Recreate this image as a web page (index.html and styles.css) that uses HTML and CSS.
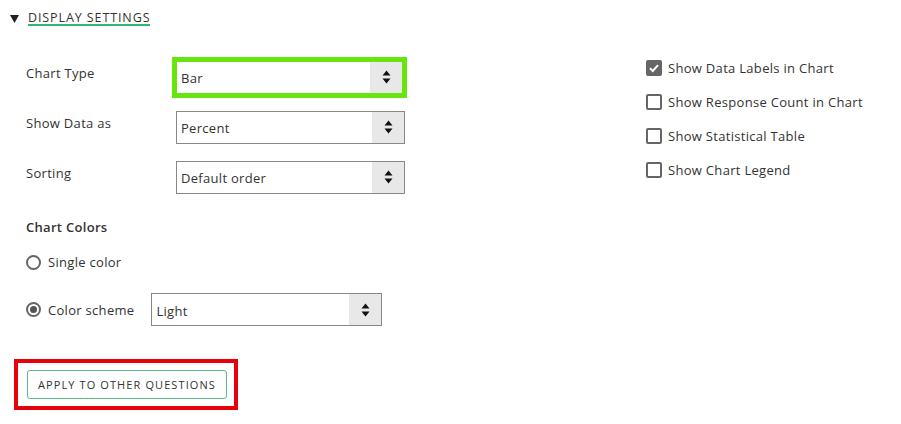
FILE: index.html
```html
<!DOCTYPE html>
<html lang="en">

<head>
    <meta charset="UTF-8">
    <meta name="viewport" content="width=device-width, initial-scale=1.0">
    <title>Display Settings</title>
    <link rel="stylesheet" href="styles.css">
</head>

<body>
    <div class="section-header">
        <span class="caret">
            <svg width="9" height="8" viewBox="0 0 9 8"><path d="M0 0 L9 0 L4.5 8 Z" fill="#222"/></svg>
        </span>
        <span class="section-title">Display Settings</span>
    </div>

    <div class="panel">
        <div class="left-col">
            <div class="form-grid">
                <div class="field-label">Chart Type</div>
                <div class="select highlighted">
                    <span class="select-value">Bar</span>
                    <span class="select-arrows">
                        <svg width="9" height="14" viewBox="0 0 9 14"><path d="M4.5 0.5 L8.5 5.5 L0.5 5.5 Z M4.5 13.5 L8.5 8.5 L0.5 8.5 Z" fill="#111"/></svg>
                    </span>
                </div>

                <div class="field-label">Show Data as</div>
                <div class="select">
                    <span class="select-value">Percent</span>
                    <span class="select-arrows">
                        <svg width="9" height="14" viewBox="0 0 9 14"><path d="M4.5 0.5 L8.5 5.5 L0.5 5.5 Z M4.5 13.5 L8.5 8.5 L0.5 8.5 Z" fill="#111"/></svg>
                    </span>
                </div>

                <div class="field-label">Sorting</div>
                <div class="select">
                    <span class="select-value">Default order</span>
                    <span class="select-arrows">
                        <svg width="9" height="14" viewBox="0 0 9 14"><path d="M4.5 0.5 L8.5 5.5 L0.5 5.5 Z M4.5 13.5 L8.5 8.5 L0.5 8.5 Z" fill="#111"/></svg>
                    </span>
                </div>
            </div>

            <div class="group-title">Chart Colors</div>

            <div class="radio-row single">
                <span class="radio"></span>
                <span class="radio-label">Single color</span>
            </div>

            <div class="radio-row scheme">
                <span class="radio checked"></span>
                <span class="radio-label">Color scheme</span>
                <div class="select scheme-select">
                    <span class="select-value">Light</span>
                    <span class="select-arrows">
                        <svg width="9" height="14" viewBox="0 0 9 14"><path d="M4.5 0.5 L8.5 5.5 L0.5 5.5 Z M4.5 13.5 L8.5 8.5 L0.5 8.5 Z" fill="#111"/></svg>
                    </span>
                </div>
            </div>

            <div class="apply-box">
                <button type="button" class="apply-btn">Apply to other questions</button>
            </div>
        </div>

        <div class="right-col">
            <div class="check-row">
                <span class="checkbox checked">
                    <svg width="12" height="12" viewBox="0 0 12 12"><path d="M2 6.2 L4.8 9 L10 3.2" fill="none" stroke="#fff" stroke-width="2"/></svg>
                </span>
                <span>Show Data Labels in Chart</span>
            </div>
            <div class="check-row">
                <span class="checkbox"></span>
                <span>Show Response Count in Chart</span>
            </div>
            <div class="check-row">
                <span class="checkbox"></span>
                <span>Show Statistical Table</span>
            </div>
            <div class="check-row">
                <span class="checkbox"></span>
                <span>Show Chart Legend</span>
            </div>
        </div>
    </div>
</body>

</html>
```

FILE: styles.css
```css
body {
    margin: 0;
    background-color: #ffffff;
    color: #333;
    font-family: 'Open Sans', sans-serif;
    font-size: 13px;
    letter-spacing: 0.3px;
}

.section-header {
    display: flex;
    align-items: flex-start;
    padding: 12px 0 0 10px;
}

.caret {
    width: 18px;
    height: 12px;
    display: flex;
    align-items: center;
    padding-top: 1px;
}

.section-title {
    text-transform: uppercase;
    font-size: 12.5px;
    line-height: 12px;
    letter-spacing: 0.9px;
    border-bottom: 2px solid #2eb872;
}

.panel {
    display: flex;
    margin-top: 26px;
}

.left-col {
    width: 620px;
    padding-left: 26px;
}

.form-grid {
    display: grid;
    grid-template-columns: 150px 229px;
    grid-auto-rows: 50px;
    align-items: center;
}

.field-label {
    padding-bottom: 8px;
}

.select {
    display: flex;
    align-items: stretch;
    height: 31px;
    border: 1px solid #888;
    background-color: #fff;
}

.select.highlighted {
    width: 225px;
    border-color: #66e60e;
    outline: 4px solid #66e60e;
}

.select-value {
    flex: 1;
    display: flex;
    align-items: center;
    padding-left: 4px;
    padding-top: 2px;
}

.select-arrows {
    width: 32px;
    display: flex;
    align-items: center;
    justify-content: center;
    background-color: #e8e8e8;
}

.group-title {
    font-weight: 600;
    line-height: 20px;
    margin-top: 15px;
}

.radio-row {
    display: flex;
    align-items: center;
    gap: 7px;
}

.radio-row.single {
    height: 30px;
    margin-top: 10px;
}

.radio-row.scheme {
    margin-top: 16px;
}

.radio {
    width: 11px;
    height: 11px;
    border: 2px solid #666;
    border-radius: 50%;
    position: relative;
}

.radio.checked::after {
    content: '';
    position: absolute;
    top: 2px;
    left: 2px;
    width: 7px;
    height: 7px;
    border-radius: 50%;
    background-color: #555;
}

.scheme-select {
    width: 229px;
    margin-left: 10px;
}

.apply-box {
    width: 207px;
    height: 36px;
    margin: 33px 0 0 -12px;
    border: 4px solid #e8000b;
    padding: 7px 0 0 9px;
}

.apply-btn {
    display: block;
    width: 200px;
    height: 29px;
    padding: 0;
    background-color: #fff;
    border: 1px solid #5cba88;
    border-radius: 3px;
    color: #333;
    font-family: 'Open Sans', sans-serif;
    font-size: 11px;
    text-transform: uppercase;
    letter-spacing: 1.1px;
}

.right-col {
    display: flex;
    flex-direction: column;
    margin-top: -1px;
}

.check-row {
    display: flex;
    align-items: center;
    gap: 6px;
    height: 34px;
}

.checkbox {
    width: 12px;
    height: 12px;
    border: 2px solid #666;
    border-radius: 2px;
    display: flex;
    align-items: center;
    justify-content: center;
}

.checkbox.checked {
    background-color: #666;
}
```
